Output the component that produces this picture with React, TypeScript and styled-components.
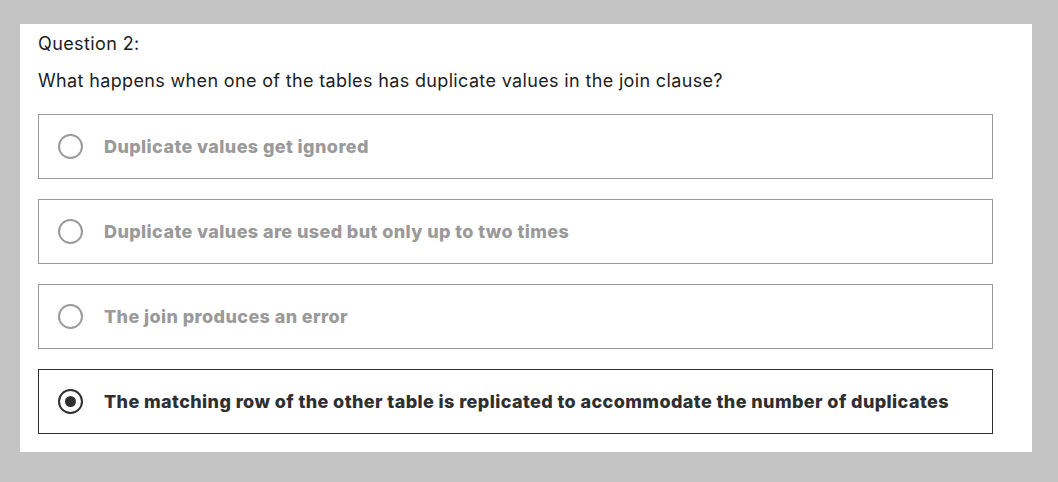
import React, { useState } from "react";
import styled, { createGlobalStyle } from "styled-components";

const Global = createGlobalStyle`
  html, body { margin: 0; padding: 0; background: #c4c4c4; }
  body { font-family: "Inter", "Liberation Sans", sans-serif; }
`;

const Page = styled.div`
  width: 1058px;
  height: 482px;
  box-sizing: border-box;
  padding: 24px 26px 30px 20px;
  background: #c4c4c4;
`;

const Panel = styled.div`
  background: #ffffff;
  height: 100%;
  box-sizing: border-box;
  padding: 9px 39px 0 18px;
  display: flex;
  flex-direction: column;
`;

const Label = styled.div`
  font-size: 18px;
  letter-spacing: 0.4px;
  line-height: 22px;
  color: #1c1d1f;
`;

const Prompt = styled.div`
  margin-top: 14px;
  font-size: 18px;
  letter-spacing: 0.35px;
  line-height: 24px;
  color: #1c1d1f;
`;

const Options = styled.div`
  margin-top: 21px;
  display: flex;
  flex-direction: column;
  gap: 20px;
`;

const Option = styled.label<{ $selected: boolean }>`
  height: 65px;
  box-sizing: border-box;
  border: 1px solid ${(p) => (p.$selected ? "#2d2f31" : "#9a9a9a")};
  display: flex;
  align-items: center;
  padding-left: 19px;
  gap: 21px;
  cursor: pointer;
`;

const Radio = styled.span<{ $selected: boolean }>`
  width: 25px;
  height: 25px;
  box-sizing: border-box;
  border-radius: 50%;
  border: 2px solid ${(p) => (p.$selected ? "#2d2f31" : "#9a9a9a")};
  display: flex;
  align-items: center;
  justify-content: center;
  flex: none;
  &::after {
    content: "";
    display: ${(p) => (p.$selected ? "block" : "none")};
    width: 11px;
    height: 11px;
    border-radius: 50%;
    background: #2d2f31;
  }
`;

const OptionText = styled.span<{ $selected: boolean }>`
  font-size: 18px;
  letter-spacing: 0.4px;
  font-weight: 800;
  color: ${(p) => (p.$selected ? "#2d2f31" : "#9a9a9a")};
`;

const answers = [
  "Duplicate values get ignored",
  "Duplicate values are used but only up to two times",
  "The join produces an error",
  "The matching row of the other table is replicated to accommodate the number of duplicates",
];

export default function App() {
  const [sel, setSel] = useState(3);
  return (
    <>
      <Global />
      <Page>
        <Panel>
          <Label>Question 2:</Label>
          <Prompt>What happens when one of the tables has duplicate values in the join clause?</Prompt>
          <Options>
            {answers.map((a, i) => (
              <Option key={i} $selected={sel === i} onClick={() => setSel(i)}>
                <Radio $selected={sel === i} />
                <OptionText $selected={sel === i}>{a}</OptionText>
              </Option>
            ))}
          </Options>
        </Panel>
      </Page>
    </>
  );
}
